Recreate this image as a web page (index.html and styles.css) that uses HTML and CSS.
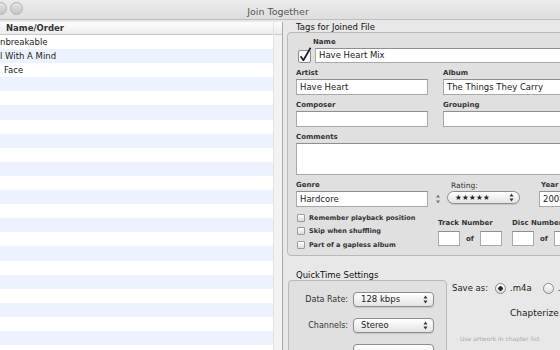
FILE: index.html
```html
<!DOCTYPE html>
<html lang="en">
<head>
  <meta charset="UTF-8" />
  <title>Join Together</title>
  <link rel="stylesheet" href="styles.css">
</head>
<body>
  <div class="window">
    <div class="titlebar">
      <span class="light light-close"></span>
      <span class="light light-min"></span>
      <span class="title">Join Together</span>
    </div>

    <div class="content">
      <div class="tracks">
        <div class="tracks-main">
          <div class="tracks-head">Name/Order</div>
          <div class="tracks-body">
            <div class="track">nbreakable</div>
            <div class="track">l With A Mind</div>
            <div class="track track-cut">Face</div>
          </div>
        </div>
        <div class="tracks-side">
          <div class="tracks-side-head"></div>
        </div>
      </div>

      <div class="settings">
        <div class="group-title">Tags for Joined File</div>
        <div class="group tags">
          <div class="label name-label">Name</div>
          <div class="name-row">
            <svg class="big-check" width="15" height="16" viewBox="0 0 15 16">
              <rect x="0.5" y="3.5" width="12" height="12" rx="1.5" fill="#fafafa" stroke="#8c8c8c"/>
              <path d="M2.6 9.2 L5.4 13.2 L12.6 0.8" fill="none" stroke="#1e1e1e" stroke-width="1.7" stroke-linejoin="round"/>
            </svg>
            <div class="field field-name">Have Heart Mix</div>
          </div>

          <div class="pairs">
            <div>
              <div class="label">Artist</div>
              <div class="field">Have Heart</div>
            </div>
            <div>
              <div class="label">Album</div>
              <div class="field">The Things They Carry</div>
            </div>
            <div>
              <div class="label">Composer</div>
              <div class="field"></div>
            </div>
            <div>
              <div class="label">Grouping</div>
              <div class="field"></div>
            </div>
          </div>

          <div class="label comments-label">Comments</div>
          <div class="field comments"></div>

          <div class="genre-row">
            <div class="genre">
              <div class="label">Genre</div>
              <div class="field">Hardcore</div>
            </div>
            <div class="stepper">
              <svg width="4" height="10" viewBox="0 0 4 10">
                <path d="M0 3.5 L2 0.5 L4 3.5Z M0 6.5 L2 9.5 L4 6.5Z" fill="#777"/>
              </svg>
            </div>
            <div class="rating">
              <div class="label label-plain rating-label">Rating:</div>
              <div class="popup pill">
                <span class="stars">★★★★★</span>
                <svg width="5" height="9" viewBox="0 0 5 9">
                  <path d="M0.5 3.5 L2.5 0.5 L4.5 3.5Z M0.5 5.5 L2.5 8.5 L4.5 5.5Z" fill="#333"/>
                </svg>
              </div>
            </div>
            <div class="year">
              <div class="label">Year</div>
              <div class="field">2008</div>
            </div>
          </div>

          <div class="tags-bottom">
            <div class="options">
              <div class="option"><span class="box"></span>Remember playback position</div>
              <div class="option"><span class="box"></span>Skip when shuffling</div>
              <div class="option"><span class="box"></span>Part of a gapless album</div>
            </div>
            <div class="number">
              <div class="label">Track Number</div>
              <div class="number-row">
                <div class="field small"></div>
                <span class="of">of</span>
                <div class="field small"></div>
              </div>
            </div>
            <div class="number">
              <div class="label">Disc Number</div>
              <div class="number-row">
                <div class="field small"></div>
                <span class="of">of</span>
                <div class="field small"></div>
              </div>
            </div>
          </div>
        </div>

        <div class="lower">
          <div class="qt">
            <div class="group-title">QuickTime Settings</div>
            <div class="group qt-box">
              <div class="qt-row">
                <span class="qt-label">Data Rate:</span>
                <div class="popup">
                  <span>128 kbps</span>
                  <svg width="5" height="9" viewBox="0 0 5 9">
                    <path d="M0.5 3.5 L2.5 0.5 L4.5 3.5Z M0.5 5.5 L2.5 8.5 L4.5 5.5Z" fill="#333"/>
                  </svg>
                </div>
              </div>
              <div class="qt-row">
                <span class="qt-label">Channels:</span>
                <div class="popup">
                  <span>Stereo</span>
                  <svg width="5" height="9" viewBox="0 0 5 9">
                    <path d="M0.5 3.5 L2.5 0.5 L4.5 3.5Z M0.5 5.5 L2.5 8.5 L4.5 5.5Z" fill="#333"/>
                  </svg>
                </div>
              </div>
              <div class="qt-row">
                <span class="qt-label"></span>
                <div class="popup"></div>
              </div>
            </div>
          </div>

          <div class="save">
            <div class="save-row">
              <span>Save as:</span>
              <span class="radio radio-on"></span>
              <span class="ext">.m4a</span>
              <span class="radio"></span>
              <span class="ext">.</span>
            </div>
            <div class="chapterize">Chapterize</div>
            <div class="artwork-note">Use artwork in chapter list</div>
          </div>
        </div>
      </div>
    </div>
  </div>
</body>
</html>
```

FILE: styles.css
```css
body {
  margin: 0;
  background-color: #e8e8e8;
  font-family: "DejaVu Sans", "Liberation Sans", sans-serif;
  color: #1c1c1c;
  overflow: hidden;
}

.window {
  width: 560px;
  height: 350px;
  overflow: hidden;
  background-color: #e8e8e8;
}

/* title bar */
.titlebar {
  position: relative;
  height: 19px;
  padding-right: 4px;
  border-bottom: 1px solid #bdbdbd;
  background: linear-gradient(#ececec, #dedede);
  text-align: center;
}

.title {
  font-size: 9.5px;
  line-height: 17px;
  color: #555;
}

.light {
  position: absolute;
  top: 2px;
  width: 11px;
  height: 11px;
  border-radius: 50%;
  border: 1px solid #b0b0b0;
  background: linear-gradient(#e6e6e6, #c4c4c4);
}

.light-close {
  left: -6px;
}

.light-min {
  left: 10px;
}

/* track list */
.content {
  display: flex;
  height: 330px;
}

.tracks {
  display: flex;
  flex-shrink: 0;
  width: 282px;
  margin-top: 2px;
  border-right: 1px solid #a9a9a9;
  background-color: #fff;
}

.tracks-main {
  width: 273px;
}

.tracks-head {
  height: 12px;
  padding-left: 6px;
  border-bottom: 1px solid #c9c9c9;
  background: linear-gradient(#fdfdfd, #ededed);
  font-size: 8.5px;
  font-weight: bold;
  line-height: 12px;
  color: #333;
}

.tracks-body {
  height: 315px;
  background: repeating-linear-gradient(#fff 0 14.1px, #edf3fe 14.1px 28.2px);
}

.track {
  height: 14.1px;
  font-size: 8.5px;
  line-height: 14px;
}

.track-cut {
  padding-left: 4px;
}

.tracks-side {
  flex: 1;
  border-left: 1px solid #e2e2e2;
  background-color: #f3f3f3;
}

.tracks-side-head {
  height: 12px;
  border-bottom: 1px solid #c9c9c9;
  background: linear-gradient(#fdfdfd, #ededed);
}

/* settings pane */
.settings {
  flex: 1;
  min-width: 0;
  padding-left: 4px;
  padding-top: 2px;
}

.group-title {
  height: 10px;
  padding-left: 9px;
  font-size: 8.5px;
  line-height: 10px;
  color: #111;
}

.group {
  border: 1px solid #b9b9b9;
  border-radius: 4px;
  background-color: #e0e0e0;
}

.tags {
  width: 320px;
  padding: 5px 0 3px 8px;
}

.label {
  height: 9px;
  margin-bottom: 1px;
  font-size: 7px;
  font-weight: bold;
  line-height: 9px;
  color: #333;
}

.label-plain {
  font-weight: normal;
  font-size: 7.5px;
}

.field {
  box-sizing: border-box;
  height: 16px;
  padding: 0 3px;
  border: 1px solid #a9a9a9;
  border-top-color: #8f8f8f;
  background-color: #fff;
  font-size: 8.5px;
  line-height: 14px;
  white-space: nowrap;
  overflow: hidden;
  color: #222;
}

.name-label {
  margin-left: 17px;
  margin-bottom: 0;
}

.name-row {
  display: flex;
  align-items: flex-end;
  gap: 2px;
}

.big-check {
  flex-shrink: 0;
  margin-left: 2px;
}

.field-name {
  flex: 1;
  height: 15px;
  line-height: 13px;
}

.pairs {
  display: grid;
  grid-template-columns: 132px 170px;
  column-gap: 15px;
  row-gap: 6px;
  margin-top: 6px;
}

.comments-label {
  margin-top: 6px;
}

.comments {
  height: 32px;
}

.genre-row {
  display: flex;
  margin-top: 6px;
}

.genre {
  width: 132px;
}

.stepper {
  display: flex;
  align-items: flex-end;
  justify-content: center;
  width: 19px;
  padding-bottom: 3px;
}

.rating {
  width: 73px;
}

.rating-label {
  padding-left: 4px;
}

.popup {
  box-sizing: border-box;
  display: flex;
  align-items: center;
  justify-content: space-between;
  height: 15px;
  padding: 0 5px 0 7px;
  border: 1px solid #8d8d8d;
  border-radius: 4px;
  background: linear-gradient(#ffffff, #e4e4e4);
  box-shadow: 0 1px 1px rgba(0, 0, 0, 0.12);
  font-size: 8.5px;
  color: #222;
}

.pill {
  height: 13px;
  margin-top: 1px;
  border-radius: 7px;
}

.stars {
  font-size: 7.5px;
  letter-spacing: 0.3px;
}

.year {
  width: 60px;
  margin-left: 19px;
}

.year .label {
  padding-left: 2px;
}

.tags-bottom {
  display: flex;
  margin-top: 4px;
}

.options {
  width: 142px;
}

.option {
  display: flex;
  align-items: center;
  height: 13.5px;
  font-size: 6.5px;
  font-weight: bold;
  color: #333;
  white-space: nowrap;
}

.box {
  width: 6px;
  height: 6px;
  margin: 0 4px 0 1px;
  border: 1px solid #9c9c9c;
  border-radius: 1px;
  background: linear-gradient(#fff, #dcdcdc);
}

.number {
  width: 62px;
  margin-right: 12px;
  padding-top: 8px;
}

.number .label {
  margin-bottom: 3px;
  white-space: nowrap;
}

.number-row {
  display: flex;
  align-items: center;
}

.field.small {
  flex-shrink: 0;
  width: 22px;
  height: 15px;
}

.of {
  margin: 0 6px;
  font-size: 7px;
  font-weight: bold;
  color: #333;
}

/* quicktime settings */
.lower {
  display: flex;
  margin-top: 14px;
}

.qt {
  flex-shrink: 0;
}

.qt-box {
  width: 159px;
  height: 80px;
  margin-left: 1px;
  padding-top: 11px;
  box-sizing: border-box;
}

.qt-row {
  display: flex;
  align-items: center;
  gap: 5px;
  margin-bottom: 11px;
}

.qt-label {
  width: 59px;
  text-align: right;
  font-size: 8px;
  color: #333;
}

.qt-row .popup {
  width: 81px;
}

.save {
  flex-shrink: 0;
  padding-top: 13px;
  margin-left: 5px;
  font-size: 8.5px;
  color: #222;
  white-space: nowrap;
}

.save-row {
  display: flex;
  align-items: center;
  height: 11px;
}

.radio {
  box-sizing: border-box;
  flex-shrink: 0;
  width: 11px;
  height: 11px;
  margin: 0 4px 0 7px;
  border: 1px solid #8a8a8a;
  border-radius: 50%;
  background: linear-gradient(#fff, #dcdcdc);
}

.radio-on {
  background: radial-gradient(circle, #2a2a2a 0 2px, transparent 2.5px), linear-gradient(#fff, #dcdcdc);
}

.ext {
  margin-right: 4px;
}

.chapterize {
  margin: 14px 0 0 58px;
  font-size: 9px;
  line-height: 11px;
  color: #222;
}

.artwork-note {
  margin: 15px 0 0 8px;
  font-size: 6px;
  line-height: 10px;
  color: #a9a9a9;
}
```
